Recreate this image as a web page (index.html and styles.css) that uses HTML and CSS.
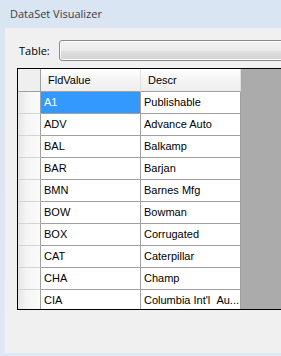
FILE: index.html
```html
<!DOCTYPE html>
<html lang="en">
<head>
  <meta charset="UTF-8">
  <title>DataSet Visualizer</title>
  <link rel="stylesheet" href="styles.css">
</head>
<body>

  <div class="titlebar">DataSet Visualizer</div>

  <div class="client">
    <div class="toolbar">
      <label class="label">Table:</label>
      <div class="combo"></div>
    </div>

    <div class="grid">
      <div class="row head">
        <div class="cell corner"></div>
        <div class="cell col">FldValue</div>
        <div class="cell col">Descr</div>
      </div>
      <div class="row">
        <div class="cell rh"></div>
        <div class="cell selected">A1</div>
        <div class="cell">Publishable</div>
      </div>
      <div class="row">
        <div class="cell rh"></div>
        <div class="cell">ADV</div>
        <div class="cell">Advance Auto</div>
      </div>
      <div class="row">
        <div class="cell rh"></div>
        <div class="cell">BAL</div>
        <div class="cell">Balkamp</div>
      </div>
      <div class="row">
        <div class="cell rh"></div>
        <div class="cell">BAR</div>
        <div class="cell">Barjan</div>
      </div>
      <div class="row">
        <div class="cell rh"></div>
        <div class="cell">BMN</div>
        <div class="cell">Barnes Mfg</div>
      </div>
      <div class="row">
        <div class="cell rh"></div>
        <div class="cell">BOW</div>
        <div class="cell">Bowman</div>
      </div>
      <div class="row">
        <div class="cell rh"></div>
        <div class="cell">BOX</div>
        <div class="cell">Corrugated</div>
      </div>
      <div class="row">
        <div class="cell rh"></div>
        <div class="cell">CAT</div>
        <div class="cell">Caterpillar</div>
      </div>
      <div class="row">
        <div class="cell rh"></div>
        <div class="cell">CHA</div>
        <div class="cell">Champ</div>
      </div>
      <div class="row">
        <div class="cell rh"></div>
        <div class="cell">CIA</div>
        <div class="cell">Columbia Int'l &nbsp;Au...</div>
      </div>
    </div>
  </div>

</body>
</html>
```

FILE: styles.css
```css
body {
  margin: 0;
  width: 281px;
  height: 356px;
  overflow: hidden;
  background: linear-gradient(#dae5f3, #dfe8f4);
  font-family: "Liberation Sans", Arial, sans-serif;
}

.titlebar {
  height: 28px;
  line-height: 27px;
  padding-left: 10px;
  font-family: "Open Sans", "Noto Sans", sans-serif;
  font-size: 11px;
  color: #3c3c3c;
}

.client {
  margin-left: 5px;
  height: 325px;
  padding-top: 12px;
  box-sizing: border-box;
  background-color: #f0f0f0;
}

.toolbar {
  display: flex;
  align-items: center;
  height: 21px;
  padding-left: 14px;
}

.label {
  font-family: "Open Sans", "Noto Sans", sans-serif;
  font-size: 11px;
  color: #000;
  margin-right: 10px;
  width: 30px;
}

.combo {
  flex: 1;
  height: 21px;
  margin-right: -10px;
  box-sizing: border-box;
  border: 1px solid #8a8a8a;
  border-radius: 3px;
  background: linear-gradient(#f3f3f3 0%, #ebebeb 50%, #dedede 51%, #d4d4d4 100%);
  box-shadow: inset 0 0 0 1px #fbfbfb;
}

.grid {
  margin: 7px 0 0 12px;
  height: 242px;
  box-sizing: border-box;
  border: 1px solid #000;
  border-right: none;
  background-color: #ababab;
  overflow: hidden;
}

.row {
  display: grid;
  grid-template-columns: 23px 100px 100px;
  width: 223px;
  height: 22px;
}

.row.head {
  height: 23px;
}

.cell {
  box-sizing: border-box;
  border-right: 1px solid #a0a0a0;
  border-bottom: 1px solid #a0a0a0;
  background-color: #fff;
  padding-left: 3px;
  font-size: 11px;
  line-height: 21px;
  color: #000;
  white-space: nowrap;
  overflow: hidden;
}

.head .cell {
  line-height: 22px;
  padding-left: 7px;
  background: linear-gradient(#ffffff, #f6f6f6 40%, #eeeeee);
  border-right-color: #e0e0e0;
}

.head .corner {
  background: #efefef;
  border-right-color: #a0a0a0;
}

.rh {
  background: linear-gradient(to right, #e6e6e6, #f5f5f5 40%, #fbfbfb);
  border-bottom-color: #d4d4d4;
}

.selected {
  background-color: #3399ff;
  color: #fff;
}
```
